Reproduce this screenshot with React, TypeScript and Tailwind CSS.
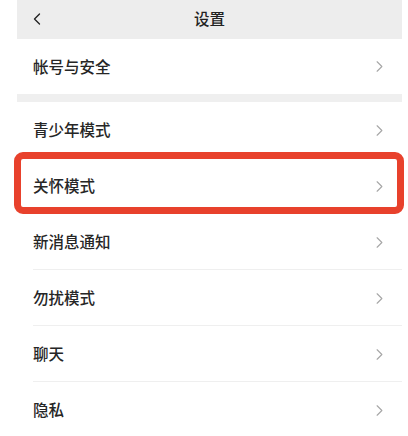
import { ChevronLeft, ChevronRight } from "lucide-react"

const font = { fontFamily: '"Noto Sans CJK SC", "Noto Sans", sans-serif' }

function Row({ label, first = false, highlight = false }: { label: string; first?: boolean; highlight?: boolean }) {
  return (
    <div className={`relative flex items-center justify-between pl-4 pr-4 ${first ? "h-[55px]" : "h-[56px]"}`}>
      <span className="text-[15.5px] font-medium text-[#262626]">{label}</span>
      <ChevronRight size={19} strokeWidth={1.4} className="text-[#a6a6a6] mr-[-3px]" />
      {!first && !highlight && <div className="absolute bottom-0 left-4 right-0 h-px bg-[#efefef]" />}
      {highlight && (
        <div className="absolute -top-[6px] bottom-0 -left-[3px] -right-[2px] rounded-[9px] border-[7px] border-[#e8412c]" />
      )}
    </div>
  )
}

export default function App() {
  const rows = ["青少年模式", "关怀模式", "新消息通知", "勿扰模式", "聊天", "隐私"]

  return (
    <div className="w-[408px] h-[436px] overflow-hidden bg-white" style={font}>
      <div className="ml-[17px] w-[385px]">
        <div className="grid grid-cols-3 items-center h-[39px] bg-[#ededed]">
          <ChevronLeft size={20} strokeWidth={1.6} className="ml-[10px] -mt-[2px] text-[#222]" />
          <span className="text-center text-[15.5px] font-medium text-[#222] -mt-[2px]">设置</span>
          <span />
        </div>
        <Row label="帐号与安全" first />
        <div className="h-[8px] bg-[#efefef]" />
        {rows.map((r) => (
          <Row key={r} label={r} highlight={r === "关怀模式"} />
        ))}
      </div>
    </div>
  )
}
